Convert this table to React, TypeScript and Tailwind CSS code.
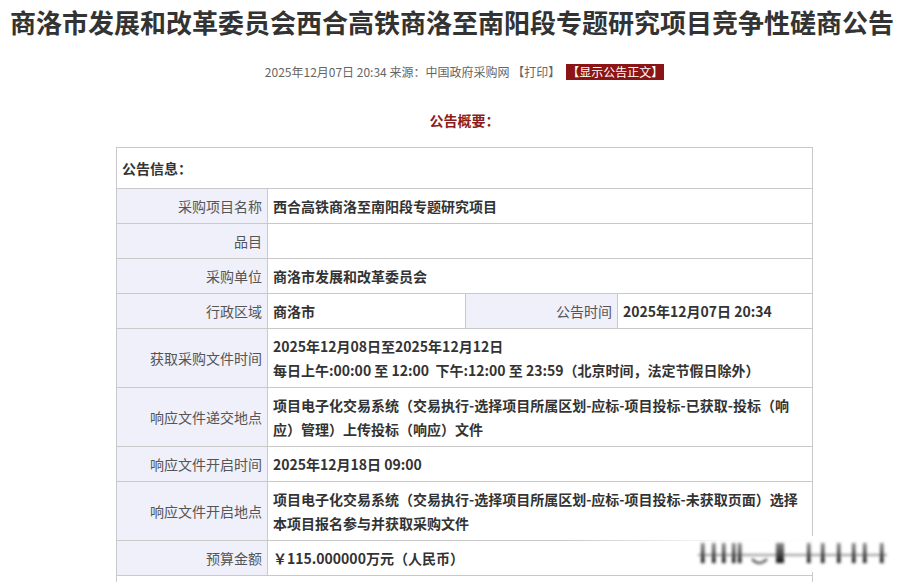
const font = { fontFamily: "'Noto Sans CJK SC', 'Noto Sans', sans-serif" };

type Row =
  | { kind: "head"; text: string }
  | { kind: "pair"; label: string; value: React.ReactNode }
  | { kind: "quad"; label: string; value: string; label2: string; value2: string };

const rows: Row[] = [
  { kind: "head", text: "公告信息：" },
  { kind: "pair", label: "采购项目名称", value: "西合高铁商洛至南阳段专题研究项目" },
  { kind: "pair", label: "品目", value: "" },
  { kind: "pair", label: "采购单位", value: "商洛市发展和改革委员会" },
  {
    kind: "quad",
    label: "行政区域",
    value: "商洛市",
    label2: "公告时间",
    value2: "2025年12月07日 20:34",
  },
  {
    kind: "pair",
    label: "获取采购文件时间",
    value: (
      <>
        2025年12月08日至2025年12月12日
        <br />
        每日上午:00:00 至 12:00&nbsp;&nbsp;下午:12:00 至 23:59（北京时间，法定节假日除外）
      </>
    ),
  },
  {
    kind: "pair",
    label: "响应文件递交地点",
    value: "项目电子化交易系统（交易执行-选择项目所属区划-应标-项目投标-已获取-投标（响应）管理）上传投标（响应）文件",
  },
  { kind: "pair", label: "响应文件开启时间", value: "2025年12月18日 09:00" },
  {
    kind: "pair",
    label: "响应文件开启地点",
    value: "项目电子化交易系统（交易执行-选择项目所属区划-应标-项目投标-未获取页面）选择本项目报名参与并获取采购文件",
  },
  { kind: "pair", label: "预算金额", value: "￥115.000000万元（人民币）" },
  { kind: "head", text: "" },
];

const labelCls =
  "border border-[#c9c9c9] bg-[#eff0f9] px-[5px] py-[5px] text-right align-middle font-normal text-[#555]";
const valueCls =
  "border border-[#c9c9c9] px-[5px] py-[5px] text-left align-middle font-bold text-[#333]";

function Watermark() {
  // 右下角模糊水印
  const bars = [701, 712, 722, 732, 738, 807, 821, 837, 852, 863, 880];
  return (
    <div className="pointer-events-none absolute left-[560px] top-[536px] h-[36px] w-[344px] bg-gradient-to-r from-white/0 via-white/95 to-white">
      <svg width="344" height="36" viewBox="560 536 344 36" className="absolute left-0 top-0">
        <defs>
          <filter id="b" x="-20%" y="-50%" width="140%" height="200%">
            <feGaussianBlur stdDeviation="1.7" />
          </filter>
          <linearGradient id="g" x1="0" y1="0" x2="0" y2="1">
            <stop offset="0" stopColor="#888" />
            <stop offset="1" stopColor="#111" />
          </linearGradient>
        </defs>
        <g filter="url(#b)">
          <line x1="698" y1="555" x2="887" y2="555" stroke="#777" strokeWidth="1.3" />
          {bars.map((x) => (
            <rect key={x} x={x} y="543" width="3.5" height="20" fill="url(#g)" />
          ))}
          <rect x="776" y="543" width="8" height="20" fill="url(#g)" />
          <path d="M752 559 Q759 567 767 559" stroke="#444" strokeWidth="2" fill="none" />
        </g>
      </svg>
    </div>
  );
}

export default function App() {
  return (
    <div className="relative h-[582px] w-[904px] overflow-hidden bg-white" style={font}>
      {/* 标题 */}
      <h1 className="whitespace-nowrap pt-[7px] text-center text-[26px] font-bold leading-[30px] text-[#333]">
        商洛市发展和改革委员会西合高铁商洛至南阳段专题研究项目竞争性磋商公告
      </h1>

      {/* 来源信息 */}
      <div className="ml-[116px] mt-[27px] flex w-[697px] items-center justify-center gap-[6px] text-[12px] leading-[16px] text-[#666]">
        <span>2025年12月07日 20:34 来源：中国政府采购网 【打印】</span>
        <span className="bg-[#8b1515] px-[1px] text-white">【显示公告正文】</span>
      </div>

      {/* 公告概要 */}
      <div className="ml-[116px] mt-[30px] w-[697px] text-center text-[14px] font-bold leading-[20px] text-[#8a1c1c]">
        公告概要：
      </div>

      <table className="ml-[116px] mt-[17px] w-[697px] table-fixed border-collapse text-[14px] leading-[24px]">
        <colgroup>
          <col className="w-[151px]" />
          <col className="w-[198px]" />
          <col className="w-[152px]" />
          <col />
        </colgroup>
        <tbody>
          {rows.map((r, i) => {
            if (r.kind === "head") {
              return (
                <tr key={i}>
                  <td
                    colSpan={4}
                    className="h-[41px] border border-[#c9c9c9] px-[5px] py-[8px] font-bold text-[#333]"
                  >
                    {r.text}
                  </td>
                </tr>
              );
            }
            if (r.kind === "quad") {
              return (
                <tr key={i}>
                  <td className={labelCls}>{r.label}</td>
                  <td className={valueCls}>{r.value}</td>
                  <td className={labelCls}>{r.label2}</td>
                  <td className={valueCls}>{r.value2}</td>
                </tr>
              );
            }
            return (
              <tr key={i}>
                <td className={labelCls}>{r.label}</td>
                <td colSpan={3} className={valueCls}>
                  {r.value}
                </td>
              </tr>
            );
          })}
        </tbody>
      </table>

      <Watermark />
    </div>
  );
}
